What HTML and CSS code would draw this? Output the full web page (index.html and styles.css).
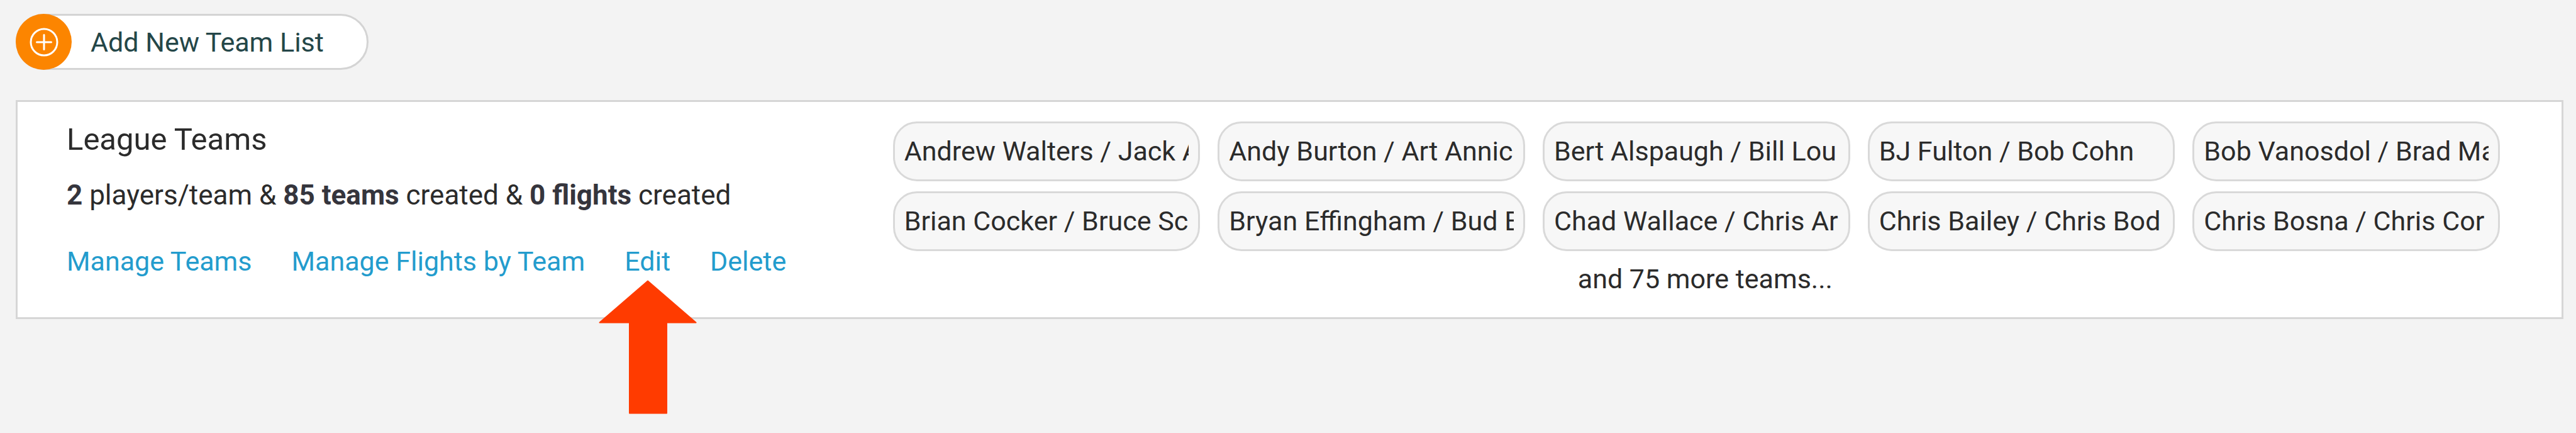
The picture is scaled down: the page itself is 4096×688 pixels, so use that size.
FILE: index.html
```html
<!DOCTYPE html>
<html lang="en">
<head>
  <meta charset="utf-8">
  <title>Team Lists</title>
  <link rel="stylesheet" href="styles.css">
</head>
<body>
  <main class="page">
    <button class="add-button" type="button">
      <span class="add-icon">
        <svg viewBox="0 0 46 46" width="46" height="46" aria-hidden="true">
          <circle cx="23" cy="23" r="21"/>
          <path d="M23 11.500v23M11.500 23h23"/>
        </svg>
      </span>
      <span>Add New Team List</span>
    </button>

    <section class="card">
      <div class="summary">
        <h2 class="title">League Teams</h2>
        <p class="stats"><strong>2</strong> players/team &amp; <strong>85 teams</strong> created &amp; <strong>0 flights</strong> created</p>
        <ul class="actions">
          <li><a href="#manage-teams">Manage Teams</a></li>
          <li><a href="#manage-flights">Manage Flights by Team</a></li>
          <li class="pointed">
            <a href="#edit">Edit</a>
            <svg class="arrow" viewBox="0 0 156 213" width="156" height="213" aria-hidden="true">
              <path d="M78 1.500L154.500 67.500H108V211.500H49V67.500H1.500Z"/>
            </svg>
          </li>
          <li><a href="#delete">Delete</a></li>
        </ul>
      </div>

      <div class="teams">
        <ul class="chips">
          <li class="chip"><span>Andrew Walters / Jack A</span></li>
          <li class="chip"><span>Andy Burton / Art Annic</span></li>
          <li class="chip"><span>Bert Alspaugh / Bill Lou</span></li>
          <li class="chip"><span>BJ Fulton / Bob Cohn</span></li>
          <li class="chip"><span>Bob Vanosdol / Brad Ma</span></li>
          <li class="chip"><span>Brian Cocker / Bruce Sc</span></li>
          <li class="chip"><span>Bryan Effingham / Bud B</span></li>
          <li class="chip"><span>Chad Wallace / Chris Ar</span></li>
          <li class="chip"><span>Chris Bailey / Chris Bod</span></li>
          <li class="chip"><span>Chris Bosna / Chris Cor</span></li>
        </ul>
        <p class="more">and 75 more teams...</p>
      </div>
    </section>
  </main>
</body>
</html>
```
FILE: styles.css
```css
* {
  box-sizing: border-box;
}

body {
  margin: 0;
  background: #f3f3f3;
  color: #2b2b2b;
  font-family: Roboto, "Liberation Sans", sans-serif;
  font-size: 43px;
  line-height: 60px;
}

h2,
p,
ul {
  margin: 0;
  padding: 0;
}

ul {
  list-style: none;
}

.page {
  min-height: 100vh;
  padding: 22px 20px 22px 25px;
}

.add-button {
  display: flex;
  align-items: center;
  gap: 30px;
  margin: 0 0 48px;
  padding: 0 68px 0 0;
  border: 3px solid #d4d4d4;
  border-radius: 45px;
  background: #fff;
  color: #244648;
  font: inherit;
}

.add-icon {
  display: flex;
  align-items: center;
  justify-content: center;
  width: 89px;
  height: 89px;
  margin: -3px 0 -3px -3px;
  border-radius: 50%;
  background: #fc8500;
}

.add-icon svg {
  fill: none;
  stroke: #fff;
  stroke-width: 3;
  stroke-linecap: round;
}

.card {
  display: grid;
  grid-template-columns: minmax(0, 1fr) minmax(0, 2fr);
  gap: 22px;
  padding: 31px 70px 31px 78px;
  border: 3px solid #d6d6d6;
  background: #fff;
}

.title {
  margin-bottom: 29px;
  font-size: 49px;
  font-weight: 400;
  line-height: 58px;
}

.stats {
  margin-bottom: 45px;
  font-size: 44px;
}

.stats strong {
  color: #35353d;
}

.actions {
  display: flex;
  gap: 63px;
  white-space: nowrap;
}

.actions a {
  color: #239ccd;
  text-decoration: none;
}

.pointed {
  position: relative;
}

.arrow {
  position: absolute;
  top: 60px;
  left: 50%;
  margin-left: -78px;
  fill: #ff3b00;
  stroke: #ff3b00;
  stroke-width: 2;
  stroke-linejoin: round;
}

.chips {
  display: grid;
  grid-template-columns: repeat(5, minmax(0, 1fr));
  gap: 16px 28px;
  padding-right: 28px;
}

.chip {
  padding: 18px 15px;
  border: 3px solid #d9d9d9;
  border-radius: 38px;
  background: #f7f7f7;
  line-height: 53px;
}

.chip span {
  display: block;
  overflow: hidden;
  white-space: nowrap;
}

.more {
  margin-top: 14px;
  text-align: center;
}
```
